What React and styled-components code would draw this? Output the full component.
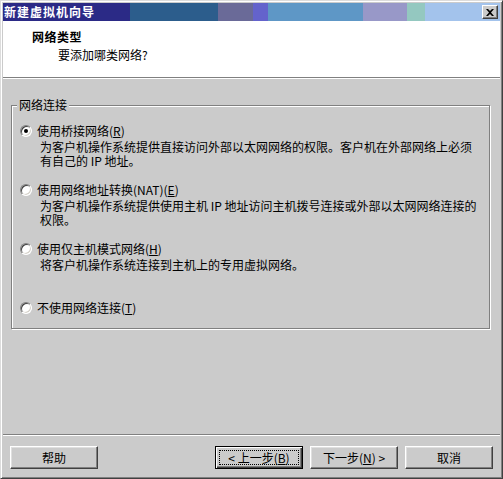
import React from "react";
import styled, { createGlobalStyle } from "styled-components";

const GlobalStyle = createGlobalStyle`
  html, body {
    margin: 0;
    padding: 0;
    background: #cbcbcb;
  }
  body {
    font-family: "Noto Sans CJK SC", "DejaVu Sans", sans-serif;
    font-size: 12px;
    color: #000;
  }
  * {
    box-sizing: border-box;
  }
`;

const Window = styled.div`
  width: 503px;
  height: 479px;
  display: flex;
  flex-direction: column;
  background: #cbcbcb;
  border: 1px solid;
  border-color: #dcdcdc #404040 #404040 #dcdcdc;
  box-shadow: inset 1px 1px #ffffff, inset -1px -1px #808080;
  padding: 2px;
`;

const TitleBar = styled.div`
  height: 18px;
  flex-shrink: 0;
  display: flex;
  align-items: center;
  justify-content: space-between;
  padding: 0 2px 0 1px;
  background: linear-gradient(
    to right,
    #2b2a86 0 127px,
    #2c5d8c 127px 215px,
    #6a6a98 215px 250px,
    #6463cc 250px 265px,
    #5e97c6 265px 360px,
    #9898c8 360px 404px,
    #94c8c0 404px 422px,
    #a3c3ec 422px
  );
`;

const TitleText = styled.span`
  color: #ffffff;
  font-weight: bold;
  font-size: 12px;
  letter-spacing: 1px;
  line-height: 14px;
`;

const CloseButton = styled.button`
  width: 16px;
  height: 14px;
  padding: 0;
  display: flex;
  align-items: center;
  justify-content: center;
  background: #cbcbcb;
  border: 1px solid;
  border-color: #ffffff #404040 #404040 #ffffff;
  box-shadow: inset -1px -1px #808080;
`;

const Header = styled.div`
  height: 56px;
  flex-shrink: 0;
  background: #ffffff;
  padding: 9px 0 0 29px;
`;

const HeaderTitle = styled.div`
  font-weight: bold;
  letter-spacing: 0.5px;
  line-height: 14px;
`;

const HeaderSub = styled.div`
  margin: 4px 0 0 26px;
  line-height: 14px;
`;

const Divider = styled.div`
  height: 2px;
  flex-shrink: 0;
  border-top: 1px solid #808080;
  border-bottom: 1px solid #ffffff;
`;

const Body = styled.div`
  flex: 1;
  padding: 26px 10px 0 8px;
`;

const Group = styled.div`
  position: relative;
  padding: 17px 0 11px 8px;
  border: 1px solid #808080;
  box-shadow: 1px 1px 0 #ffffff, inset 1px 1px 0 #ffffff;
`;

const Legend = styled.span`
  position: absolute;
  top: -8px;
  left: 5px;
  padding: 0 2px;
  line-height: 14px;
  background: #cbcbcb;
`;

const Option = styled.div`
  min-height: ${(p) => (p.$last ? "16px" : "59px")};
`;

const OptionRow = styled.label`
  height: 17px;
  display: flex;
  align-items: flex-start;
  gap: 5px;
  line-height: 16px;
`;

const Radio = styled.span`
  position: relative;
  width: 12px;
  height: 12px;
  margin-top: 2px;
  flex-shrink: 0;
  border-radius: 50%;
  background: #ffffff;
  border: 1px solid;
  border-color: #808080 #ffffff #ffffff #808080;
  box-shadow: inset 1px 1px #404040, inset -1px -1px #d4d0c8;

  &::after {
    content: "";
    display: ${(p) => (p.$checked ? "block" : "none")};
    position: absolute;
    left: 3px;
    top: 3px;
    width: 4px;
    height: 4px;
    border-radius: 50%;
    background: #000000;
  }
`;

const Desc = styled.p`
  margin: 0;
  padding-left: 20px;
  line-height: 14px;
`;

const Key = styled.span`
  text-decoration: underline;
`;

const Footer = styled.div`
  flex-shrink: 0;
  display: flex;
  padding: 10px 7px 7px 7px;
`;

const RightButtons = styled.div`
  margin-left: auto;
  display: flex;
  gap: 7px;
`;

const Button = styled.button`
  position: relative;
  width: 88px;
  height: 23px;
  padding: 0;
  font-family: inherit;
  font-size: 12px;
  color: #000000;
  background: #cbcbcb;
  border: 1px solid;
  border-color: ${(p) =>
    p.$focused ? "#000000" : "#ffffff #404040 #404040 #ffffff"};
  box-shadow: ${(p) =>
    p.$focused
      ? "inset 1px 1px #ffffff, inset -1px -1px #404040, inset -2px -2px #808080"
      : "inset -1px -1px #808080, inset 1px 1px #dfdfdf"};

  &::after {
    content: "";
    display: ${(p) => (p.$focused ? "block" : "none")};
    position: absolute;
    inset: 3px;
    border: 1px dotted #000000;
  }
`;

const options = [
  {
    label: "使用桥接网络",
    key: "R",
    checked: true,
    lines: [
      "为客户机操作系统提供直接访问外部以太网网络的权限。客户机在外部网络上必须",
      "有自己的 IP 地址。",
    ],
  },
  {
    label: "使用网络地址转换(NAT)",
    key: "E",
    lines: [
      "为客户机操作系统提供使用主机 IP 地址访问主机拨号连接或外部以太网网络连接的",
      "权限。",
    ],
  },
  {
    label: "使用仅主机模式网络",
    key: "H",
    lines: ["将客户机操作系统连接到主机上的专用虚拟网络。"],
  },
  {
    label: "不使用网络连接",
    key: "T",
    lines: [],
  },
];

export default function App() {
  return (
    <>
      <GlobalStyle />
      <Window>
        <TitleBar>
          <TitleText>新建虚拟机向导</TitleText>
          <CloseButton>
            <svg width="8" height="7" viewBox="0 0 8 7">
              <path
                d="M0 0h2l2 2 2-2h2L5 3.5 8 7H6L4 5 2 7H0l3-3.5z"
                fill="#000"
              />
            </svg>
          </CloseButton>
        </TitleBar>
        <Header>
          <HeaderTitle>网络类型</HeaderTitle>
          <HeaderSub>要添加哪类网络?</HeaderSub>
        </Header>
        <Divider />
        <Body>
          <Group>
            <Legend>网络连接</Legend>
            {options.map((opt, i) => (
              <Option key={opt.key} $last={i === options.length - 1}>
                <OptionRow>
                  <Radio $checked={opt.checked} />
                  <span>
                    {opt.label}(<Key>{opt.key}</Key>)
                  </span>
                </OptionRow>
                {opt.lines.length > 0 && (
                  <Desc>
                    {opt.lines.map((line, j) => (
                      <React.Fragment key={j}>
                        {j > 0 && <br />}
                        {line}
                      </React.Fragment>
                    ))}
                  </Desc>
                )}
              </Option>
            ))}
          </Group>
        </Body>
        <Divider />
        <Footer>
          <Button>帮助</Button>
          <RightButtons>
            <Button $focused>
              &lt; 上一步(<Key>B</Key>)
            </Button>
            <Button>
              下一步(<Key>N</Key>) &gt;
            </Button>
            <Button>取消</Button>
          </RightButtons>
        </Footer>
      </Window>
    </>
  );
}
